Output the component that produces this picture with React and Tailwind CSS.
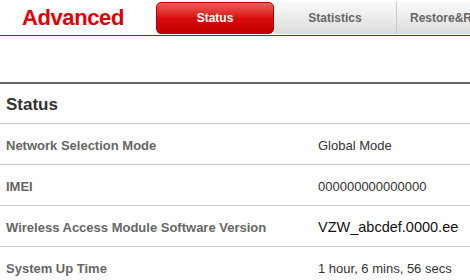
const rows = [
  { label: 'Network Selection Mode', value: 'Global Mode' },
  { label: 'IMEI', value: '000000000000000' },
  { label: 'Wireless Access Module Software Version', value: 'VZW_abcdef.0000.ee', big: true },
  { label: 'System Up Time', value: '1 hour, 6 mins, 56 secs' },
]

export default function App() {
  return (
    <div className="w-[470px] h-[280px] overflow-hidden bg-white font-['Liberation_Sans',Arial,sans-serif]">
      {/* header with tabs */}
      <div className="flex h-[36px] border-b border-[#d40000] overflow-hidden">
        <div className="w-[156px] shrink-0 h-full pl-[22px] pt-[1px] flex items-center">
          <span className="text-[22px] font-bold text-[#e00000] leading-none tracking-[-0.4px]">Advanced</span>
        </div>
        <div className="flex h-[32px] mt-[2px] flex-1 min-w-0">
          <div className="w-[118px] shrink-0 h-full rounded-[5px] bg-gradient-to-b from-[#ef5656] via-[#d80c0c] to-[#c40000] border border-[#b80000] flex items-center justify-center text-white text-[12px] font-bold">
            Status
          </div>
          <div className="w-[123px] shrink-0 h-full bg-gradient-to-b from-[#fafafa] to-[#dcdcdc] border-r border-[#c8c8c8] flex items-center justify-center text-[#666] text-[12px] font-bold">
            Statistics
          </div>
          <div className="flex-1 min-w-0 h-full bg-gradient-to-b from-[#fafafa] to-[#dcdcdc] pl-[13px] flex items-center text-[#666] text-[12px] font-bold whitespace-nowrap overflow-hidden">
            Restore&amp;R
          </div>
        </div>
      </div>

      {/* status table */}
      <div className="mt-[46px] border-t-2 border-[#666]">
        <div className="h-[40px] flex items-center pt-[2px] px-[6px] border-b border-[#ccc] text-[17px] font-bold text-[#333]">
          Status
        </div>
        {rows.map((r) => (
          <div key={r.label} className="h-[41px] flex items-center pt-[4px] border-b border-[#ccc]">
            <div className="w-[318px] pl-[6px] text-[13px] font-bold text-[#666] whitespace-nowrap">{r.label}</div>
            <div className={r.big ? 'text-[14.5px] text-[#111] whitespace-nowrap' : 'text-[13px] text-[#333] whitespace-nowrap'}>
              {r.value}
            </div>
          </div>
        ))}
      </div>
    </div>
  )
}
